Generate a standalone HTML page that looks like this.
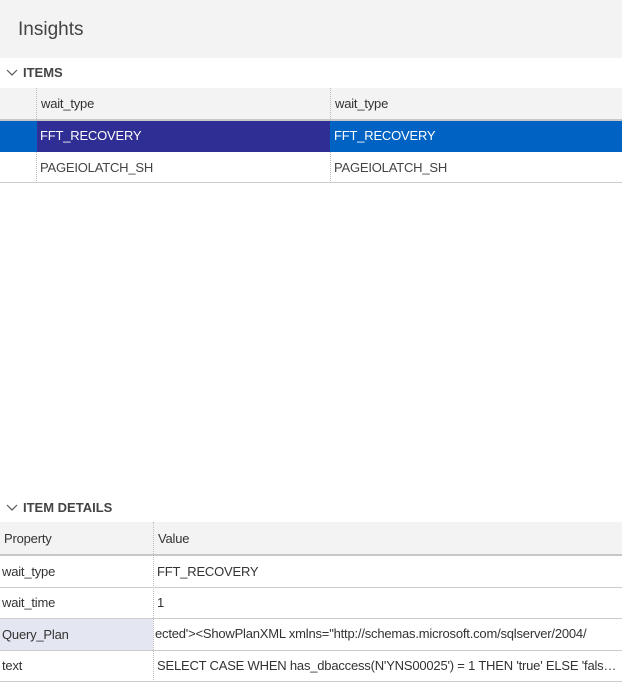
<!DOCTYPE html>
<html><head><style>
body{margin:0;width:622px;height:692px;background:#fff;font-family:"Liberation Sans",sans-serif;position:relative;overflow:hidden;color:#333}
.a{position:absolute}
.t{font-size:13px;white-space:nowrap;letter-spacing:-0.2px}
</style></head><body>
<div class="a" style="left:0;top:0;width:622px;height:58px;background:#f3f3f3"></div>
<div class="a" style="left:18px;top:19px;font-size:19px;color:#444">Insights</div>
<svg class="a" style="left:6px;top:68px" width="12" height="10"><path d="M1 2 L6 7 L11 2" stroke="#555" fill="none" stroke-width="1.2"/></svg>
<div class="a" style="left:23px;top:65px;font-size:13px;font-weight:bold;color:#444">ITEMS</div>
<div class="a" style="left:0;top:88px;width:622px;height:31px;background:#f3f3f3;border-bottom:2px solid #c8c8c8"></div>
<div class="a" style="left:36px;top:88px;height:95px;border-left:1px dotted #bbb"></div>
<div class="a" style="left:330px;top:88px;height:95px;border-left:1px dotted #bbb"></div>
<div class="a t" style="left:41px;top:96px">wait_type</div>
<div class="a t" style="left:335px;top:96px">wait_type</div>
<div class="a" style="left:0;top:121px;width:622px;height:31px;background:#0063c4"></div>
<div class="a" style="left:37px;top:121px;width:293px;height:31px;background:#2e2e94"></div>
<div class="a t" style="left:40px;top:128px;color:#fff">FFT_RECOVERY</div>
<div class="a t" style="left:334px;top:128px;color:#fff">FFT_RECOVERY</div>
<div class="a t" style="left:40px;top:160px;color:#444">PAGEIOLATCH_SH</div>
<div class="a t" style="left:334px;top:160px;color:#444">PAGEIOLATCH_SH</div>
<div class="a" style="left:0;top:182px;width:622px;border-top:1px solid #ccc"></div>

<svg class="a" style="left:6px;top:503px" width="12" height="10"><path d="M1 2 L6 7 L11 2" stroke="#555" fill="none" stroke-width="1.2"/></svg>
<div class="a" style="left:23px;top:500px;font-size:13px;font-weight:bold;color:#444">ITEM DETAILS</div>
<div class="a" style="left:0;top:522px;width:622px;height:32px;background:#f3f3f3;border-bottom:2px solid #c8c8c8"></div>
<div class="a" style="left:0;top:618px;width:153px;height:32px;background:#e4e6f1"></div>
<div class="a" style="left:153px;top:522px;height:160px;border-left:1px dotted #bbb"></div>
<div class="a" style="left:0;top:587px;width:622px;border-top:1px solid #ccc"></div>
<div class="a" style="left:0;top:618px;width:622px;border-top:1px solid #ccc"></div>
<div class="a" style="left:0;top:650px;width:622px;border-top:1px solid #ccc"></div>
<div class="a" style="left:0;top:681px;width:622px;border-top:1px solid #ccc"></div>
<div class="a t" style="left:4px;top:531px">Property</div>
<div class="a t" style="left:158px;top:531px">Value</div>
<div class="a t" style="left:2px;top:564px">wait_type</div>
<div class="a t" style="left:157px;top:564px">FFT_RECOVERY</div>
<div class="a t" style="left:2px;top:595px">wait_time</div>
<div class="a t" style="left:157px;top:595px">1</div>
<div class="a t" style="left:2px;top:627px">Query_Plan</div>
<div class="a t" style="left:155px;top:626px">ected'&gt;&lt;ShowPlanXML xmlns="http://schemas.microsoft.com/sqlserver/2004/</div>
<div class="a t" style="left:2px;top:658px">text</div>
<div class="a t" style="left:157px;top:658px;width:460px;overflow:hidden;text-overflow:ellipsis">SELECT CASE WHEN has_dbaccess(N'YNS00025') = 1 THEN 'true' ELSE 'false' END</div>
</body></html>
